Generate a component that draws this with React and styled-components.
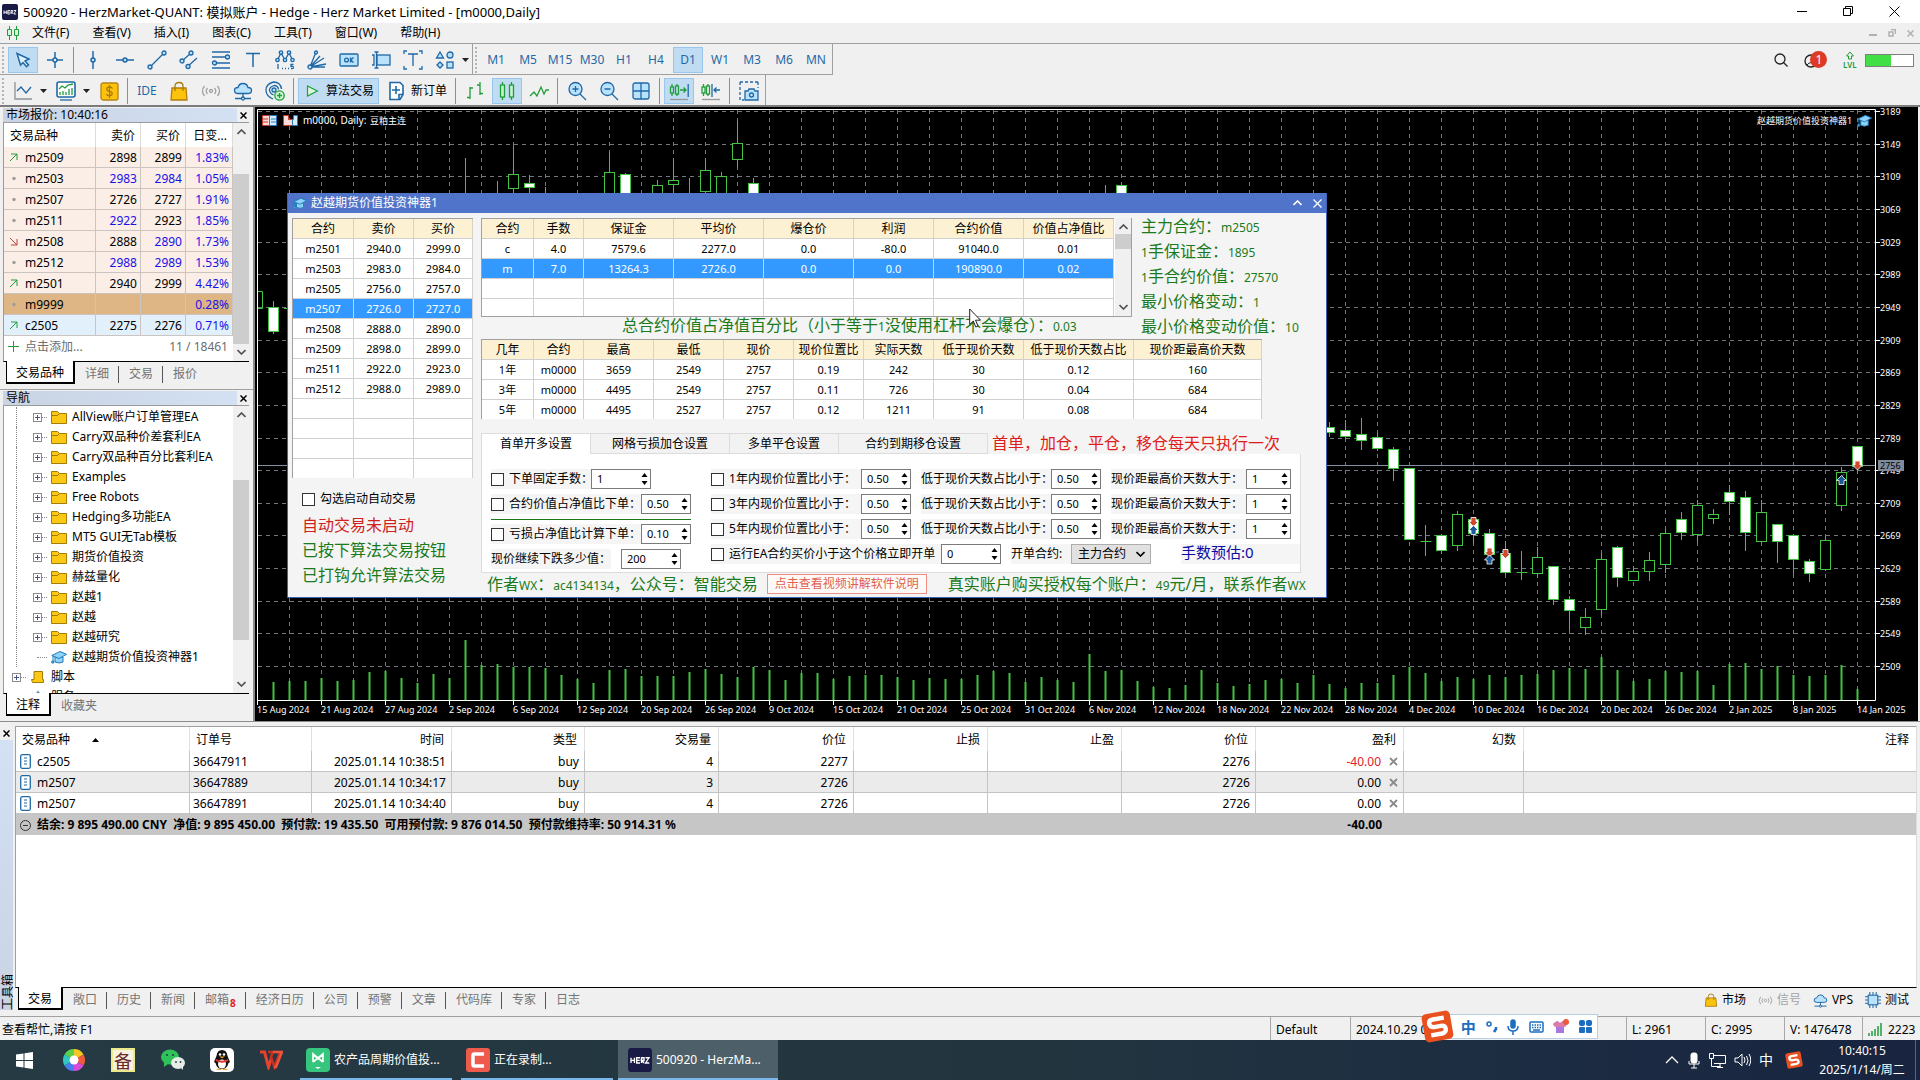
import React from 'react';
import styled, { createGlobalStyle, css } from 'styled-components';

const Global = createGlobalStyle`
  *, *::before, *::after { box-sizing: border-box; }
  body { margin: 0; background: #f0f0f0; color: #000; font: 12px/16px "Noto Sans", "Noto Sans CJK SC", sans-serif; }
  button, input, select { font: inherit; color: inherit; margin: 0; padding: 0; border: 0; background: none; border-radius: 0; }
  table { border-spacing: 0; table-layout: fixed; }
  th, td { padding: 1px 0 0; font-weight: 400; white-space: nowrap; }
  svg { display: block; flex: none; }
`;

const BLUE = '#1f68a6';
const SKY = '#b9e2fd';
const GREEN = '#1f9d3a';

/* ---------- icons ---------- */
const Glyph = ({ size = 20, color = BLUE, w = 1.3, children }) => (
  <svg width={size} height={size} viewBox="0 0 20 20" fill="none" stroke={color} strokeWidth={w} aria-hidden="true">{children}</svg>
);

const Hat = ({ size = 16 }) => (
  <svg width={size} height={size} viewBox="0 0 16 16" aria-hidden="true">
    <path d="M4 8v5q4 2 8-0V8z" fill="#8fd3fb" stroke="#1e7ab8" />
    <path d="M.8 6.500 9 2.500l6.500 2.800L8 9.500z" fill="#8fd3fb" stroke="#1e7ab8" />
    <path d="M2 7v5M.8 12h2v2h-2z" stroke="#1e7ab8" fill="#8fd3fb" />
  </svg>
);

const herz = (s) => (
  <svg width={s} height={s} viewBox="0 0 16 16" aria-hidden="true">
    <rect width="16" height="16" rx="2" fill="#191a45" />
    <path d="M2 6.500v3.500M4.300 6.500v3.500M2 8.200h2.300M8 6.500H5.800V10H8M5.800 8.200h2M9 10V6.500h1.700v1.800H9l1.700 1.700M11.700 6.500h2.300L11.700 10h2.500" stroke="#fff" strokeWidth=".9" fill="none" />
  </svg>
);

const ic = {
  cursor: <Glyph><path d="M4 3.500 16 9l-4 2 3.500 4-2 1.700L10 12.500 7.500 15z" fill="#dff1fd" strokeWidth="1.500" /></Glyph>,
  cross: <Glyph w={1.500}><path d="M10 2v6M10 12v6M2 10h6M12 10h6" /><circle cx="10" cy="10" r="2" /></Glyph>,
  vline: <Glyph w={1.500}><path d="M10 1v7M10 12v7" /><circle cx="10" cy="10" r="2" fill={SKY} /></Glyph>,
  hline: <Glyph w={1.500}><path d="M1 10h7M12 10h7" /><circle cx="10" cy="10" r="2" fill={SKY} /></Glyph>,
  trend: <Glyph><path d="M3 17 17 3" /><circle cx="3" cy="17" r="2" fill={SKY} /><circle cx="17" cy="3" r="2" fill={SKY} /></Glyph>,
  channel: <Glyph><path d="M3 11 12 3M8 17 18 8" /><circle cx="3" cy="11" r="2" fill={SKY} /><circle cx="12" cy="3" r="2" fill={SKY} /><circle cx="9" cy="16.500" r="2" fill={SKY} /></Glyph>,
  fib: <Glyph><path d="M1 2h18M1 7h14M5 13h14M1 18h18" /><circle cx="16.500" cy="7" r="2" fill={SKY} /><circle cx="3.500" cy="13" r="2" fill={SKY} /></Glyph>,
  text: <Glyph w={1.500}><path d="M3 3.500h14M10 3.500V17" /></Glyph>,
  elliott: <Glyph><path d="M2.500 10 6 3l4 7 4-7 3.500 7" />{[[2.5, 10], [6, 2.5], [10, 10], [14, 2.5], [17.5, 10]].map(([x, y]) => <circle key={x} cx={x} cy={y} r="1.700" fill={SKY} />)}<path d="M3 14v5M7 18.500h1M10 18.500h1M13 18.500h1M18.500 14.500H16V16.500q2.500-.5 2.500 1T16 18.500" /></Glyph>,
  gann: <Glyph><path d="M3 17 9 2M3 17l10-11M3 17l14-9M3 17l16-3M3 17h15" /><circle cx="3" cy="17" r="2" fill={SKY} /><circle cx="9" cy="2.500" r="1.500" fill={SKY} /></Glyph>,
  ok: <Glyph><rect x="1" y="4" width="18" height="12" rx="1" fill={SKY} /><circle cx="7.500" cy="10" r="1.900" /><path d="M11.500 7.500v5M14.500 7.500l-2.800 2.500 2.800 2.500" /></Glyph>,
  label: <Glyph><rect x="6" y="5" width="13" height="10" fill={SKY} /><path d="M1 5h2v10H1M5.500 2v16M3.500 2h4M3.500 18h4" /></Glyph>,
  tbox: <Glyph><path d="M5 4h10M10 4v12M1 4V1h3M16 1h3v3M19 16v3h-3M4 19H1v-3" /></Glyph>,
  shapes: <Glyph><path d="M5 2l3.500 6h-7zM5 12l3 3-3 3-3-3z" fill={SKY} /><circle cx="15" cy="5" r="3" fill={SKY} /><rect x="12" y="12" width="6" height="6" fill={SKY} /></Glyph>,
  lineChart: <Glyph><path d="M2 1v17h17" stroke="#8a9299" /><path d="m4 10 4-4 5 6 5-6" /></Glyph>,
  indicators: <Glyph><rect x="1" y="1" width="18" height="15" rx="2" fill="#fff" strokeWidth="1.600" /><path d="m3 8 3-3 3 2 3-3 5-1" stroke={GREEN} /><path d="M4 14v-3M7 14v-4M10 14v-3M13 14V8M16 14V7" stroke={GREEN} /><path d="M4 19h12" /></Glyph>,
  dollar: <Glyph><rect x="2" y="2" width="17" height="17" rx="2" fill="#fdc20b" stroke="#b58415" /><path d="M13.500 7.500q-1-1.500-3-1.500-2.700 0-2.700 2t2.700 2.400 2.700 2.200-2.700 2.200q-2 0-3.200-1.600M10.500 4v13" stroke="#a97a0e" /></Glyph>,
  bag: <Glyph><path d="M3 7h14l1 12H2z" fill="#fdc20b" stroke="#b07f0d" /><path d="M6 10V5q0-3.500 4-3.500T14 5v5" stroke="#a97a0e" /></Glyph>,
  signals: <Glyph color="#a3a3a3"><circle cx="10" cy="10" r="1.500" /><path d="M6.500 7q-2.500 3 0 6M13.500 7q2.500 3 0 6M3.500 5q-4 5 0 10M16.500 5q4 5 0 10" /></Glyph>,
  cloud: <Glyph><path d="M5 12.500q-3.500 0-3.500-3T5 6.500Q6 2.500 10 2.500t5 4q3.500 0 3.500 3t-3.500 3z" fill={SKY} /><path d="M10 12.500v4M2 17.500h6M12 17.500h6" /><circle cx="10" cy="17.500" r="1.500" /></Glyph>,
  antenna: <Glyph><path d="M8 18q-7-3-7-9t7.500-8q7 0 8 7M8.500 14q-4-2-4-5t4.500-4.500q4 0 4.500 4" /><circle cx="9" cy="9" r="2" fill={SKY} /><circle cx="14.500" cy="14.500" r="4.700" fill="#c9f5cf" stroke={GREEN} /><path d="M14.500 12v5M12 14.500h5" stroke={GREEN} /></Glyph>,
  play: <Glyph size={18}><path d="M5 4.500 16 10 5 15.500z" fill="#d8f8dc" stroke={GREEN} /></Glyph>,
  order: <Glyph w={1.600}><path d="M4 1.500h10l3 3v9l-3 5H4z" fill="#fff" /><path d="M10 5v8M6 9h8M13 18.500v-5h4" /></Glyph>,
  bars: <Glyph color={GREEN}><path d="M5 6v12M2 16.500h3M5 7h3M15 1v13M12 4h3M15 12.500h3" /></Glyph>,
  candles: <Glyph color={GREEN}><path d="M5.500 1v3M5.500 16v3M14.500 1v3M14.500 16v3" /><rect x="3.500" y="4" width="4" height="12" fill="#c6f3cc" /><rect x="12.500" y="4" width="4" height="12" fill="#c6f3cc" /></Glyph>,
  zigzag: <Glyph color={GREEN}><path d="m1 15 4-4 3 4 4-9 3 7 2-4h3" /></Glyph>,
  zoomIn: <Glyph><circle cx="8.500" cy="8" r="6.500" fill={SKY} /><path d="M8.500 5v6M5.500 8h6M13 13l6 6" /></Glyph>,
  zoomOut: <Glyph><circle cx="8.500" cy="8" r="6.500" fill={SKY} /><path d="M5.500 8h6M13 13l6 6" /></Glyph>,
  tiles: <Glyph><rect x="2" y="2" width="16" height="16" rx="2" fill={SKY} /><path d="M10 2v16M2 10h16" /></Glyph>,
  scroll: <Glyph color={GREEN}><path d="M3 3v3M3 12v3M8 3v2M8 13v2M11 9h6M14.500 6.500 17 9l-2.500 2.500" /><rect x="1.500" y="6" width="3" height="6" /><rect x="6.500" y="5" width="3" height="8" /><path d="M19.200 3v13" stroke={BLUE} /><path d="M1 18.500h18" stroke="#999" /></Glyph>,
  shift: <Glyph color={GREEN}><path d="M2.500 3v3M2.500 12v3M7 3v2M7 13v2" /><rect x="1" y="6" width="3" height="6" /><rect x="5.500" y="5" width="3" height="8" /><path d="M11 3v13M19 9h-6M15.500 6.500 13 9l2.500 2.500" stroke={BLUE} /><path d="M1 18.500h18" stroke="#999" /></Glyph>,
  camera: <Glyph><path d="M1 1h18M1 1v18h4M19 1v6" strokeDasharray="3 2" /><path d="M6 10h3l1-2h5l1 2h3v9H6z" fill={SKY} /><circle cx="12.500" cy="14" r="2" /></Glyph>,
  up: <svg width="9" height="9" viewBox="0 0 9 9" fill="none" stroke={GREEN} aria-hidden="true"><path d="M1 8 8 1M2 1h6v6" /></svg>,
  down: <svg width="9" height="9" viewBox="0 0 9 9" fill="none" stroke="#b8453a" aria-hidden="true"><path d="m1 1 7 7M8 2v6H2" /></svg>,
  flat: <svg width="9" height="9" viewBox="0 0 9 9" aria-hidden="true"><circle cx="5" cy="4.500" r="1.700" fill="#9d9d9d" /></svg>,
  plus: <svg width="11" height="11" viewBox="0 0 11 11" stroke={GREEN} aria-hidden="true"><path d="M5.500 0v11M0 5.500h11" /></svg>,
  folder: <svg width="16" height="13" viewBox="0 0 16 13" aria-hidden="true"><path d="M.5.500h6l2 2h7v10H.5z" fill="#fbc913" stroke="#a57c00" /><path d="M.5 4.500h6l2-2" fill="none" stroke="#a57c00" /></svg>,
  script: <svg width="13" height="13" viewBox="0 0 13 13" aria-hidden="true"><path d="M3 .5h8.500v8h1v3H1.500l-1-3H3z" fill="#fbc913" stroke="#a57c00" /></svg>,
  service: <Glyph size={14}><circle cx="10" cy="10" r="6" fill={SKY} /><path d="M10 1v4M3 4l3 3M17 4l-3 3" /></Glyph>,
  doc: <svg width="11" height="15" viewBox="0 0 11 15" fill="#fff" stroke={BLUE} aria-hidden="true"><rect x=".7" y=".7" width="9.600" height="13.600" rx="1.500" strokeWidth="1.300" /><path d="M4 4h3M4 7h3M4 10h3" /></svg>,
  tinyX: <svg width="7" height="7" viewBox="0 0 7 7" stroke="currentColor" strokeWidth="1.500" aria-hidden="true"><path d="m.5.500 6 6M6.500.5l-6 6" /></svg>,
  rowX: <svg width="9" height="9" viewBox="0 0 9 9" stroke="currentColor" strokeWidth="1.800" aria-hidden="true"><path d="m1 1 7 7M8 1 1 8" /></svg>,
  chevUp: <svg width="9" height="6" viewBox="0 0 9 6" fill="none" stroke="currentColor" strokeWidth="1.600" aria-hidden="true"><path d="m.5 5 4-4 4 4" /></svg>,
  chevDown: <svg width="9" height="6" viewBox="0 0 9 6" fill="none" stroke="currentColor" strokeWidth="1.600" aria-hidden="true"><path d="m.5 1 4 4 4-4" /></svg>,
  drop: <svg width="7" height="4" viewBox="0 0 7 4" aria-hidden="true"><path d="M0 0h7L3.500 4z" fill="#222" /></svg>,
  chip: <Glyph size={16}><rect x="4" y="4" width="12" height="12" fill={SKY} /><path d="M6 0v4M10 0v4M14 0v4M6 16v4M10 16v4M14 16v4M0 6h4M0 10h4M0 14h4M16 6h4M16 10h4M16 14h4" /></Glyph>,
};

/* ---------- frame ---------- */
const Page = styled.div`
  display: flex; flex-direction: column; min-height: 100vh; overflow: hidden;
`;
const TitleBar = styled.header`
  display: flex; align-items: center; justify-content: space-between; height: 23px; padding: 0 20px 0 2px; background: #fff;
`;
const Caption = styled.div`display: flex; align-items: center; gap: 5px; white-space: nowrap; font-size: 13px;`;
const Controls = styled.div`display: flex; align-items: center; gap: ${(p) => p.$gap}px; color: ${(p) => p.$color || '#000'};`;
const Plain = styled.button`display: flex; align-items: center; justify-content: center; gap: 4px; white-space: nowrap;`;
const MenuBar = styled.nav`
  display: flex; align-items: center; gap: 12px; height: 21px; padding: 0 6px; border-bottom: 1px solid #a0a0a0;
`;
const Menus = styled.div`display: flex; align-items: center; gap: 23px; margin-right: auto;`;

const Tools = styled.div`
  display: flex; justify-content: space-between; align-items: flex-start; border-bottom: 2px solid #7c7c7c;
`;
const ToolRow = styled.div`display: flex;`;
const ToolGroup = styled.div`
  display: flex; align-items: center; gap: 2px; height: ${(p) => (p.$last ? 30 : 31)}px; padding: 2px 1px 1px 2px;
  border-right: 1px solid #a0a0a0; ${(p) => !p.$last && 'border-bottom: 1px solid #a0a0a0;'}
  &::before { content: ''; width: 2px; height: 26px; margin-right: 2px; background: repeating-linear-gradient(#b4b4b4 0 2px, transparent 2px 4px); }
`;
const Tool = styled.button`
  display: flex; align-items: center; justify-content: center; gap: 5px; width: ${(p) => p.$w || 30}px; height: 26px; color: ${(p) => p.$color || BLUE};
  ${(p) => p.$on && css`background: #c0dcf3; border: 1px solid #98c6ec;`}
`;
const Drop = styled.button`width: 9px; height: 26px; display: flex; align-items: center;`;
const Sep = styled.span`width: 1px; height: 26px; margin: 0 2px 0 1px; background: #8e8e8e;`;
const Status = styled.div`display: flex; align-items: center; padding-right: 6px; height: 32px;`;
const Spacer = styled.span`width: ${(p) => p.$w}px; flex: none;`;
const Battery = styled.span`
  width: 49px; height: 13px; border: 1px solid #808080; background: linear-gradient(90deg, #3fdf45 54%, #fff 54%);
`;

/* ---------- side panels ---------- */
const Work = styled.div`display: flex; align-items: stretch; border-bottom: 1px solid #8c8c8c;`;
const Side = styled.aside`width: 255px; flex: none; border-right: 2px solid #8c8c8c;`;
const Panel = styled.section`padding: 1px 4px 5px 3px; ${(p) => p.$top && 'border-bottom: 1px solid #a0a0a0;'}`;
const PanelHead = styled.div`display: flex; align-items: center; height: 14px;`;
const PanelTitle = styled.h2`
  margin: 0; flex: 1; height: 14px; padding: 0 3px; font-size: 12px; line-height: 14px; font-weight: 400;
  background: linear-gradient(90deg, #c9d3e3, #d3e1f3);
`;
const HeadClose = styled(Plain)`width: 12px; height: 14px;`;
const PanelBody = styled.div`
  display: flex; height: ${(p) => p.$h}px; overflow: hidden; background: #fff; border-top: 1px solid #9a9a9a; border-left: 1px solid #9a9a9a; border-bottom: 1px solid #000;
`;
const Fill = styled.div`flex: 1; min-width: 0; overflow: hidden;`;
const ScrollTrack = styled.div`
  display: flex; flex-direction: column; align-items: center; justify-content: space-between; width: ${(p) => p.$w || 16}px; margin-left: ${(p) => p.$gap || 0}px;
  padding: 6px 0; background: #f0f0f0; color: #505050;
`;
const Thumb = styled.span`align-self: stretch; height: ${(p) => p.$h}px; margin: ${(p) => p.$m}px 0 auto; background: #cdcdcd;`;

const Quotes = styled.table`
  width: 100%;
  th { height: 24px; text-align: right; padding-right: 5px; border-right: 1px solid #dcdcdc; }
  th:first-child { text-align: left; padding-left: 6px; }
  td { height: 21px; text-align: right; padding-right: 3px; border-right: 1px solid #cbc4c0; border-bottom: 1px solid #cbc4c0; }
`;
const QuoteRow = styled.tr`background: ${(p) => p.$bg || '#fbeee6'};`;
const Price = styled.td`color: ${(p) => (p.$blue ? '#1a10e8' : '#000')};`;
const Sym = styled.span`display: flex; align-items: center; gap: 7px; padding-left: 5px;`;
const AddRow = styled.div`display: flex; align-items: center; justify-content: space-between; height: 21px; padding: 0 5px 0 4px; color: #6d6d6d;`;
const AddBtn = styled(Plain)`gap: 6px;`;

const Tabs = styled.div`display: flex; padding-left: 3px; height: 22px;`;
const Tab = styled.button`
  position: relative; padding: 1px 10px 0; height: ${(p) => (p.$on ? 23 : 22)}px; color: ${(p) => (p.$on ? '#000' : '#747474')}; white-space: nowrap;
  ${(p) => p.$on && css`margin-top: -1px; background: #fff; border: 1px solid #000; border-width: 0 2px 2px 1px; padding: 2px 9px 0;`}
  ${(p) => p.$bar && css`&::after { content: ''; position: absolute; right: 0; top: 4px; bottom: 1px; width: 1px; background: #555; }`}
`;
const Sup = styled.sub`font-size: 10px; font-weight: 700; color: #e02020; line-height: 0; margin-left: 1px;`;

const Tree = styled.ul`
  list-style: none; margin: 0; padding: 1px 0 0 12px;
`;
const Node = styled.li`
  display: flex; align-items: center; height: 20px; white-space: nowrap; 
  ${(p) => (p.$root ? 'margin-left: -4px;' : css`padding-left: ${p.$pad}px; border-left: 1px dotted #888;`)}
`;
const Expand = styled.button`
  width: 9px; height: 9px; border: 1px solid #8a8a8a; background: linear-gradient(#44538a, #44538a) center / 5px 1px no-repeat, linear-gradient(#44538a, #44538a) center / 1px 5px no-repeat, #fff;
`;
const Dots = styled.span`width: ${(p) => p.$w}px; border-top: 1px dotted #888; margin-right: ${(p) => p.$r || 4}px;`;
const Leaf = styled.button`display: flex; align-items: center; gap: ${(p) => p.$gap || 5}px;`;

/* ---------- chart ---------- */
const ChartPane = styled.main`position: relative; flex: 1; min-width: 0; background: #000;`;
const ChartSvg = styled.svg`width: 100%; height: auto; overflow: visible;`;

const X = (k) => 273.5 + 16 * k;
const vol1 = [366, 362, 362, 354, 362, 360, 335, 333, 354, 369, 342, 354, 240, 315, 312, 321, 320, 323, 345, 357, 369, 329, 327, 348, 348, 348, 336, 327, 343, 351, 320, 330, 360, 340, 339, 357, 348, 345, 345, 351, 360, 354, 357, 357, 345, 333, 339, 365, 351, 360, 366, 282, 333, 330, 363, 381, 384, 374, 330, 369, 378, 372, 360, 357, 369].map((v) => 560 + v / 3);
const vol2 = [1433, 1455, 1466, 1454, 1453, 1433, 1413, 1428, 1448, 1438, 1443, 1433, 1438, 1433, 1430, 1421, 1416, 1419, 1388, 1421, 1448, 1443, 1423, 1426, 1423, 1458, 1406, 1404, 1419, 1412, 1433, 1436, 1433, 1409, 1468].map((v) => 90 + v / 2.45);
const volumes = [...vol1, ...vol2];
/* slot, body top, body bottom, wick top, wick bottom, filled */
const early = [
  [0, 307, 331, 301, 334, 1], [12, 193, 193, 158, 193, 0], [14, 193, 193, 181, 193, 0], [15, 174, 188, 146, 200, 0], [16, 183, 187, 175, 200, 1],
  [17, 193, 193, 187, 193, 0], [21, 172, 200, 152, 200, 0], [22, 174, 200, 173, 200, 1], [24, 185, 200, 180, 200, 0], [25, 180, 184, 158, 200, 0], [26, 200, 200, 178, 200, 0],
  [27, 170, 191, 158, 200, 0], [28, 176, 200, 172, 200, 0], [29, 143, 159, 121, 167, 0], [30, 183, 200, 178, 200, 1], [52, 200, 200, 185, 200, 0], [53, 185, 200, 183, 200, 1],
];
const late = [
  [826, 837, 813, 850, 1], [832, 847, 808, 855, 1], [843, 857, 803, 882, 1], [850, 877, 840, 885, 1], [880, 925, 875, 958, 1], [927, 1099, 927, 1103, 1], [1104, 1104, 1066, 1142, 0],
  [1090, 1126, 1088, 1137, 1], [1039, 1114, 1031, 1129, 0], [1052, 1085, 1045, 1110, 1], [1086, 1138, 1076, 1150, 1], [1137, 1180, 1105, 1188, 1], [1180, 1180, 1129, 1200, 0],
  [1145, 1183, 1120, 1195, 0], [1166, 1248, 1166, 1262, 1], [1247, 1273, 1240, 1323, 1], [1291, 1315, 1269, 1335, 0], [1148, 1271, 1134, 1286, 0], [1120, 1192, 1117, 1218, 1],
  [1179, 1200, 1165, 1204, 0], [1152, 1178, 1132, 1203, 0], [1086, 1161, 1075, 1184, 0], [1051, 1082, 1034, 1102, 1], [1017, 1089, 1004, 1107, 0], [1039, 1048, 1027, 1063, 0],
  [986, 1008, 967, 1041, 1], [996, 1082, 982, 1130, 1], [1034, 1106, 1004, 1110, 0], [1063, 1106, 1063, 1159, 1], [1091, 1150, 1088, 1185, 1], [1154, 1183, 1150, 1205, 1],
  [1103, 1173, 1093, 1178, 0], [936, 1016, 923, 1031, 0], [872, 920, 872, 940, 1],
].map((c, n) => [66 + n, ...c.slice(0, 4).map((v) => Math.round(90 + v / 2.45)), c[4]]);
const candles = [...early, ...late];
const dates = '15 Aug 2024,21 Aug 2024,27 Aug 2024,2 Sep 2024,6 Sep 2024,12 Sep 2024,20 Sep 2024,26 Sep 2024,9 Oct 2024,15 Oct 2024,21 Oct 2024,25 Oct 2024,31 Oct 2024,6 Nov 2024,12 Nov 2024,18 Nov 2024,22 Nov 2024,28 Nov 2024,4 Dec 2024,10 Dec 2024,16 Dec 2024,20 Dec 2024,26 Dec 2024,2 Jan 2025,8 Jan 2025,14 Jan 2025'.split(',');
const prices = Array.from({ length: 18 }, (_, n) => 3189 - 40 * n);
const priceY = (n) => Math.round(111 + n * 32.65) + 0.5;
const LIME = '#41c441';

const Arrow = ({ x, y, sell }) => (
  <path transform={`translate(${x} ${y}) scale(1 ${sell ? -1 : 1})`} d="M0-5 5 0H2.500V4h-5V0H-5z" fill={sell ? '#d0492f' : '#1c5a9c'} stroke="#fff" strokeWidth=".8" />
);

const Chart = () => (
  <ChartSvg viewBox="255 107 1665 614" fontSize="9" fill="#fff" role="img" aria-label="m0000 Daily">
    <rect x="1918" y="107" width="2" height="614" fill="#f0f0f0" />
    <g stroke="#71797f" strokeDasharray="4 4">
      {Array.from({ length: 50 }, (_, n) => <path key={n} d={`M${289.5 + 32 * n} 110V700`} />)}
      {prices.map((p, n) => <path key={p} d={`M258 ${priceY(n)}H1875`} />)}
    </g>
    <path d="M257 465.500H1875" stroke="#8390a0" />
    <g fill={LIME}>{volumes.map((y, k) => <rect key={k} x={X(k) - 1} y={Math.round(y)} width="2" height={700 - Math.round(y)} />)}</g>
    <path d="M258 291.500h4.500v17H258M284 308.500h4" fill="none" stroke={LIME} />
    <g stroke={LIME}>
      {candles.map(([k, t, b, wt, wb, f]) => (
        <g key={k}>
          <path d={`M${X(k)} ${wt}V${wb}`} />
          {t === b ? t > 200 && <path d={`M${X(k) - 5} ${t + 0.5}h11`} /> : <rect x={X(k) - 5} y={t + 0.5} width="10" height={Math.max(b - t, 2)} fill={f ? '#fff' : '#000'} />}
        </g>
      ))}
    </g>
    <path d="M1490 553l16-2M1842 476l16-11" stroke="#2f6ea5" strokeDasharray="3 3" />
    <Arrow x={1473.5} y={521.5} sell /><Arrow x={1473.5} y={530.5} /><Arrow x={1489.5} y={552} sell /><Arrow x={1489.5} y={560} />
    <Arrow x={1505.5} y={553.5} sell /><Arrow x={1841.5} y={480.5} /><Arrow x={1857.5} y={465} sell />
    <path d="M257.500 109.500H1875.500V700.500H257.500z" fill="none" stroke="#fff" />
    {dates.map((d, n) => <g key={d}><path d={`M${257.5 + 64 * n} 700v5`} stroke="#fff" /><text x={257 + 64 * n} y="713">{d}</text></g>)}
    {prices.map((p, n) => <g key={p}><path d={`M1875 ${priceY(n)}h5`} stroke="#fff" /><text x="1880" y={priceY(n) + 3}>{p}</text></g>)}
    <rect x="1878" y="460" width="26" height="11" fill="#7f8b9c" /><text x="1880" y="469" fill="#000">2756</text>
    <path d="M262.500 115.500h7v10h-7z" fill="#fbdcd8" stroke="#c0392b" /><path d="M269.500 115.500h7v10h-7z" fill="#d5ecfb" stroke="#2a7ab8" />
    <path d="M263 119h5M263 122h5" stroke="#c0392b" /><path d="M271 119h5M271 122h5" stroke="#2a7ab8" />
    <path d="M283.500 115.500h5v4h4v6h-9z" fill="#fbdcd8" stroke="#c0392b" /><path d="M297.500 115.500h-4v4h-1v6h5z" fill="#d5ecfb" stroke="#2a7ab8" />
    <text x="303" y="124" fontSize="10">m0000, Daily:</text><text x="370" y="124">豆粕主连</text>
    <text x="1757" y="124">赵越期货价值投资神器1</text>
    <g transform="translate(1857 113)"><Hat size={15} /></g>
  </ChartSvg>
);

/* ---------- dialog ---------- */
const Dialog = styled.section`
  position: absolute; left: 32px; top: 86px; width: 1040px; height: 405px; background: #f4f4f4; border: 1px solid #3e62b5; border-top: 0;
`;
const DialogBar = styled.header`
  display: flex; align-items: center; height: 20px; padding: 0 4px 0 5px; gap: 4px; background: #4f74c9; color: #fff;
`;
const DialogName = styled.h1`margin: 0; flex: 1; font-size: 12px; line-height: 16px; font-weight: 400;`;
const DialogBody = styled.div`display: flex; gap: 9px; padding: 5px 4px 4px;`;
const LeftCol = styled.div`width: 180px; flex: none;`;
const MainCol = styled.div`flex: 1; min-width: 0;`;
const Grid = styled.table`
  width: ${(p) => p.$w}px; background: #fff; text-align: center; border-top: 1px solid #a0a0a0; border-left: 1px solid #a0a0a0; font-size: 11px;
  th { height: 20px; background: #fdf1d3; font-size: 12px; line-height: 16px; border-right: 1px solid #d8d2c4; border-bottom: 1px solid #d0d0d0; }
  td { height: 20px; line-height: 16px; border-right: 1px solid #d0d0d0; border-bottom: 1px solid #d0d0d0; }
  tr:last-child td { height: 19px; border-bottom: 0; }
`;
const GridRow = styled.tr`${(p) => p.$on && 'background: #3399ff; color: #fff;'}`;
const Frame = styled.div`display: flex; width: 651px; height: 99px; overflow: hidden; background: #fff; border: 1px solid #a0a0a0; border-width: 0 1px 1px 0;`;
const Note = styled.p`
  margin: 0; height: 17px; font-size: 16px; line-height: 17px; white-space: nowrap; color: ${(p) => p.$color || '#1b7a1b'}; padding-left: ${(p) => p.$indent || 0}px;
`;
const Num = styled.span`font-size: 12px;`;
const Overview = styled.div`display: flex; gap: 9px; margin-bottom: 4px;`;
const Facts = styled.div`display: flex; flex-direction: column; gap: 8px; flex: 1;`;
const Check = styled.input.attrs({ type: 'checkbox' })`
  appearance: none; width: 13px; height: 13px; flex: none; background: #fff; border: 1px solid #333;
  &:checked { background: #3399ff; }
`;
const CheckLabel = styled.label`
  display: flex; align-items: center; gap: 5px; width: ${(p) => p.$w}px; height: 20px; flex: none; white-space: nowrap; margin-right: ${(p) => p.$r || 0}px;
  background: ${(p) => (p.$clear ? 'none' : '#f5f5f5')};
`;
const Messages = styled.div`display: flex; flex-direction: column; gap: 8px; padding: 11px 0 0 10px;`;
const Strip = styled.div`display: flex; align-items: center; gap: 4px; margin-top: 14px; height: 21px;`;
const SetTabs = styled.div`display: flex; height: 21px;`;
const SetTab = styled.button`
  width: ${(p) => p.$w}px; height: 21px; border: 1px solid #dcdcdc; border-left-width: ${(p) => (p.$on ? 1 : 0)}px; background: ${(p) => (p.$on ? '#fff' : '#f2f2f2')};
  ${(p) => p.$on && 'border-bottom: 0;'}
`;
const SetPanel = styled.div`display: flex; width: 820px; height: 119px; padding: 5px 0 0 9px; background: #fff; border: 1px solid #dcdcdc; border-top: 0;`;
const Stack = styled.div`display: flex; flex-direction: column; gap: 5px; padding-top: 10px; width: ${(p) => p.$w}px; flex: none;`;
const Rule = styled.hr`margin: 0 0 -1px; border: 0; height: 1px; width: 200px; background: #1b7a1b;`;
const Divider = styled.span`width: 1px; height: 110px; margin: 0 9px 0 10px; background: #1b7a1b;`;
const Line = styled.div`display: flex; align-items: center; height: 20px;`;
const SpinBox = styled.span`
  display: flex; width: ${(p) => p.$w}px; height: 20px; flex: none; border: 1px solid #7a7a7a; background: #fff; margin-right: 10px;
  input { flex: 1; min-width: 0; padding-left: 5px; font-size: 11px; appearance: textfield; outline: 0; }
  input::-webkit-inner-spin-button { appearance: none; margin: 0; }
`;
const Steps = styled.span`display: flex; flex-direction: column; justify-content: center; gap: 4px; width: 16px; padding-left: 4px;`;
const Pick = styled.span`display: flex; align-items: center; position: relative; width: 80px; height: 20px; margin-right: 30px; background: #e1e1e1; border: 1px solid #adadad;
  select { appearance: none; width: 100%; height: 18px; padding-left: 6px; outline: 0; }
  svg { position: absolute; right: 5px; pointer-events: none; }
`;
const Estimate = styled.output`flex: 1; height: 20px; background: #f5f5f5; color: #0c0ca4; font-size: 15px; line-height: 17px;`;
const Foot = styled.footer`display: flex; align-items: center; height: 22px; padding-left: 6px;`;
const Video = styled.a`
  margin: 0 21px 0 9px; width: 160px; height: 20px; line-height: 18px; border: 1px solid #ef8f84; background: #fffaf8; color: #e0604f; text-decoration: none; text-align: center;
`;
const Pointer = styled.svg`position: absolute; left: 714px; top: 201px;`;

const Spin = ({ id, w, value, step }) => (
  <SpinBox $w={w}>
    <input id={id} type="number" defaultValue={value} step={step} aria-label={id} />
    <Steps>
      <Plain aria-label="增加"><svg width="7" height="4" viewBox="0 0 7 4"><path d="M.5 4h6L3.500 0z" /></svg></Plain>
      <Plain aria-label="减少"><svg width="7" height="4" viewBox="0 0 7 4"><path d="M.5 0h6L3.500 4z" /></svg></Plain>
    </Steps>
  </SpinBox>
);

const DataGrid = ({ widths, heads, rows, on }) => (
  <Grid $w={widths.reduce((a, b) => a + b, 0)}>
    <colgroup>{widths.map((w, i) => <col key={i} style={{ width: w }} />)}</colgroup>
    <thead><tr>{heads.map((h) => <th key={h}>{h}</th>)}</tr></thead>
    <tbody>{rows.map((r, i) => <GridRow key={i} $on={i === on}>{heads.map((h, j) => <td key={h}>{r[j]}</td>)}</GridRow>)}</tbody>
  </Grid>
);
const split = (s) => s.split('|').map((r) => r.split(' '));
const contracts = [...split('m2501 2940.0 2999.0|m2503 2983.0 2984.0|m2505 2756.0 2757.0|m2507 2726.0 2727.0|m2508 2888.0 2890.0|m2509 2898.0 2899.0|m2511 2922.0 2923.0|m2512 2988.0 2989.0'), [], [], [], []];
const holdings = [...split('c 4.0 7579.6 2277.0 0.0 -80.0 91040.0 0.01|m 7.0 13264.3 2726.0 0.0 0.0 190890.0 0.02'), [], []];
const history = split('1年 m0000 3659 2549 2757 0.19 242 30 0.12 160|3年 m0000 4495 2549 2757 0.11 726 30 0.04 684|5年 m0000 4495 2527 2757 0.12 1211 91 0.08 684');

const InvestDialog = () => (
  <Dialog aria-label="赵越期货价值投资神器1">
    <DialogBar>
      <Hat size={14} /><DialogName>赵越期货价值投资神器1</DialogName>
      <Controls $gap={11} $color="#fff"><Plain aria-label="收起">{ic.chevUp}</Plain><Plain aria-label="关闭"><svg width="9" height="9" viewBox="0 0 9 9" stroke="#fff" strokeWidth="1.300"><path d="m.5.500 8 8M8.500.5l-8 8" /></svg></Plain></Controls>
    </DialogBar>
    <DialogBody>
      <LeftCol>
        <DataGrid widths={[61, 60, 59]} heads={['合约', '卖价', '买价']} rows={contracts} on={3} />
        <Messages>
          <CheckLabel $w={150} $clear><Check />勾选启动自动交易</CheckLabel>
          <Note $color="#cf1f1f">自动交易未启动</Note>
          <Note>已按下算法交易按钮</Note>
          <Note>已打钩允许算法交易</Note>
        </Messages>
      </LeftCol>
      <MainCol>
        <Overview>
          <div>
            <Frame>
              <DataGrid widths={[52, 50, 90, 90, 90, 80, 90, 90]} heads={['合约', '手数', '保证金', '平均价', '爆仓价', '利润', '合约价值', '价值占净值比']} rows={holdings} on={1} />
              <ScrollTrack $w={17} $gap={1}><Plain aria-label="上">{ic.chevUp}</Plain><Thumb $m={4} $h={15} /><Plain aria-label="下">{ic.chevDown}</Plain></ScrollTrack>
            </Frame>
            <Note $indent={141}>总合约价值占净值百分比（小于等于<Num>1</Num>没使用杠杆不会爆仓）：<Num>0.03</Num></Note>
          </div>
          <Facts>
            <Note>主力合约：<Num>m2505</Num></Note>
            <Note><Num>1</Num>手保证金：<Num>1895</Num></Note>
            <Note><Num>1</Num>手合约价值：<Num>27570</Num></Note>
            <Note>最小价格变动：<Num>1</Num></Note>
            <Note>最小价格变动价值：<Num>10</Num></Note>
          </Facts>
        </Overview>
        <DataGrid widths={[52, 50, 70, 70, 70, 70, 70, 90, 110, 128]} heads={['几年', '合约', '最高', '最低', '现价', '现价位置比', '实际天数', '低于现价天数', '低于现价天数占比', '现价距最高价天数']} rows={history} />
        <Strip>
          <SetTabs><SetTab $on $w={110}>首单开多设置</SetTab><SetTab $w={139}>网格亏损加仓设置</SetTab><SetTab $w={109}>多单平仓设置</SetTab><SetTab $w={149}>合约到期移仓设置</SetTab></SetTabs>
          <Note $color="#e01b1b">首单，加仓，平仓，移仓每天只执行一次</Note>
        </Strip>
        <SetPanel>
          <Stack $w={201}>
            <Line><CheckLabel $w={100}><Check />下单固定手数：</CheckLabel><Spin id="固定手数" w={60} value="1" /></Line>
            <Line><CheckLabel $w={150}><Check />合约价值占净值比下单：</CheckLabel><Spin id="净值比" w={50} value="0.50" step="0.01" /></Line>
            <Rule />
            <Line><CheckLabel $w={150}><Check />亏损占净值比计算下单：</CheckLabel><Spin id="亏损比" w={50} value="0.10" step="0.01" /></Line>
            <Line><CheckLabel $w={120} $r={10} htmlFor="下跌值">现价继续下跌多少值：</CheckLabel><Spin id="下跌值" w={60} value="200" /></Line>
          </Stack>
          <Divider />
          <Stack $w={589}>
            {['1', '3', '5'].map((y) => (
              <Line key={y}>
                <CheckLabel $w={150}><Check />{y}年内现价位置比小于：</CheckLabel><Spin id={`位置比${y}`} w={50} value="0.50" step="0.01" />
                <CheckLabel $w={130} htmlFor={`占比${y}`}>低于现价天数占比小于：</CheckLabel><Spin id={`占比${y}`} w={50} value="0.50" step="0.01" />
                <CheckLabel $w={135} htmlFor={`天数${y}`}>现价距最高价天数大于：</CheckLabel><Spin id={`天数${y}`} w={45} value="1" />
              </Line>
            ))}
            <Line>
              <CheckLabel $w={230}><Check />运行EA合约买价小于这个价格立即开单</CheckLabel><Spin id="开单价" w={60} value="0" />
              <CheckLabel $w={60} htmlFor="open-contract">开单合约:</CheckLabel>
              <Pick><select id="open-contract"><option>主力合约</option></select>{ic.chevDown}</Pick>
              <Estimate>手数预估:0</Estimate>
            </Line>
          </Stack>
        </SetPanel>
        <Foot>
          <Note>作者<Num>WX</Num>：<Num>ac4134134</Num>，公众号：智能交易</Note>
          <Video href="#video">点击查看视频讲解软件说明</Video>
          <Note>真实账户购买授权每个账户：<Num>49</Num>元/月，联系作者<Num>WX</Num></Note>
        </Foot>
      </MainCol>
    </DialogBody>
  </Dialog>
);

/* ---------- terminal ---------- */
const Terminal = styled.section`display: flex; flex: 1; padding: 4px 3px 6px 0; border-bottom: 1px solid #a0a0a0;`;
const Handle = styled.div`display: flex; flex-direction: column; width: 15px; padding: 2px 2px 0 0; align-items: center; gap: 2px;`;
const HandleClose = styled(Plain)`height: 10px; width: 13px;`;
const HandleBar = styled.div`flex: 1; width: 13px; display: flex; align-items: flex-end; background: linear-gradient(#d3e1f3, #c9d3e3);`;
const Vertical = styled.span`writing-mode: vertical-rl; text-orientation: sideways; transform: rotate(180deg); width: 13px; line-height: 13px; font-family: "Noto Sans CJK SC", sans-serif;`;
const TermBody = styled.div`flex: 1; min-width: 0; display: flex; flex-direction: column;`;
const TermSheet = styled.div`flex: 1; background: #fff; border: 1px solid #a0a0a0; border-bottom-color: #000; border-right-color: #ddd;`;
const Orders = styled.table`
  width: 100%;
  th { height: 24px; text-align: right; padding-right: 7px; border-right: 1px solid #e0e0e0; }
  th:nth-child(-n+2) { text-align: left; padding-left: 6px; }
  td { height: 21px; text-align: right; padding-right: 5px; border-right: 1px solid #c4c4c4; border-bottom: 1px solid #c4c4c4; }
  td:nth-child(2) { text-align: left; padding-left: 3px; }
  th:last-child, td:last-child { border-right: 0; }
`;
const OrderRow = styled.tr`background: ${(p) => (p.$alt ? '#ebebeb' : '#fff')};`;
const OrderName = styled.span`display: flex; align-items: center; gap: ${(p) => p.$gap || 6}px; padding-left: 4px;`;
const SortHead = styled.span`display: flex; align-items: center; gap: 22px;`;
const Profit = styled.span`display: flex; align-items: center; justify-content: flex-end; gap: 8px; color: ${(p) => (p.$red ? '#e0202a' : '#000')};`;
const RowClose = styled(Plain)`color: #8a8a8a;`;
const TotalRow = styled.tr`background: #c6c6c6; && td { font-weight: 700; border: 0; text-align: left; white-space: pre; }`;
const TotalProfit = styled.span`display: block; text-align: right; padding-right: 17px;`;
const TermFoot = styled.div`display: flex; justify-content: space-between;`;
const Links = styled.div`display: flex; align-items: center; gap: 12px; padding: 2px 8px 0 0;`;
const StatusBar = styled.footer`position: relative; display: flex; height: 23px; padding-left: 2px;`;
const StatusText = styled.span`flex: 1; line-height: 25px;`;
const Cell = styled.span`
  display: flex; align-items: center; gap: 6px; width: ${(p) => p.$w}px; height: 23px; padding: 2px 0 0 5px; white-space: nowrap; overflow: hidden;
  border-left: 1px solid #a8a8a8;
`;
const Ime = styled.div`
  position: absolute; left: 1436px; bottom: 1px; display: flex; align-items: center; justify-content: space-around; width: 162px; height: 25px; padding-left: 19px; background: #fff; border: 1px solid #b5cfe6; color: #1b6dc1;
`;
const ImeLogo = styled.span`position: absolute; left: -16px; top: -5px;`;
const ImeText = styled.span`font-size: 15px; font-weight: 700; line-height: 20px;`;

const orders = [
  ['c2505', '36647911', '2025.01.14 10:38:51', '4', '2277', '2276', '-40.00'],
  ['m2507', '36647889', '2025.01.14 10:34:17', '3', '2726', '2726', '0.00'],
  ['m2507', '36647891', '2025.01.14 10:34:40', '4', '2726', '2726', '0.00'],
];

/* ---------- taskbar ---------- */
const Taskbar = styled.footer`
  display: flex; justify-content: space-between; height: 40px; color: #fff; background: linear-gradient(90deg, #263a44, #22353f 55%, #1c2c42 80%, #182440);
`;
const Dock = styled.div`display: flex; align-items: center;`;
const DockIcon = styled.button`display: flex; align-items: center; justify-content: center; width: ${(p) => p.$w || 49}px; height: 40px;`;
const Running = styled.button`
  display: flex; align-items: center; gap: 4px; width: ${(p) => p.$w}px; height: 40px; padding: 2px 0 0 ${(p) => p.$pad}px; margin-right: ${(p) => p.$gap}px; border-bottom: 2px solid #7ab8ec; white-space: nowrap;
  background: ${(p) => (p.$on ? '#4d5f68' : 'none')};
`;
const Tray = styled.div`display: flex; align-items: center; gap: 8px; padding-right: 4px;`;
const TrayIme = styled.span`margin-right: 4px; font-size: 14px; line-height: 20px;`;
const Clock = styled.time`display: block; width: 90px; margin-left: 6px; text-align: center; line-height: 19px; white-space: nowrap;`;
const Desk = styled.span`width: 1px; height: 40px; background: #59667a;`;
const Memo = styled.span`font-size: 18px; line-height: 20px; width: 24px; height: 24px; border: 2px solid #ece98a; background: #f8f3e0; color: #6d2a2a; font-family: "Noto Sans CJK SC", sans-serif; display: flex; align-items: center; justify-content: center;`;
const Faint = styled.span`color: #a3a3a3;`;

const Sogou = ({ size }) => (
  <svg width={size} height={size} viewBox="0 0 30 30" aria-hidden="true"><g transform="rotate(-10 15 15)"><rect x="2" y="2" width="26" height="26" rx="4" fill="#e8501f" /><path d="M22 8H12q-4 0-4 3.300T12 15h6q4 0 4 3.300T18 22H8" fill="none" stroke="#fff" strokeWidth="4" /></g></svg>
);

const quotes = [
  ['up', 'm2509', '2898', '2899', '1.83%', ''], ['flat', 'm2503', '2983', '2984', '1.05%', 'ab'], ['flat', 'm2507', '2726', '2727', '1.91%', ''], ['flat', 'm2511', '2922', '2923', '1.85%', 'a'],
  ['down', 'm2508', '2888', '2890', '1.73%', 'b'], ['flat', 'm2512', '2988', '2989', '1.53%', 'ab'], ['up', 'm2501', '2940', '2999', '4.42%', ''], ['flat', 'm9999', '', '', '0.28%', '', '#deb584'], ['up', 'c2505', '2275', '2276', '0.71%', '', '#e2f0fc'],
];
const folders = ['AllView账户订单管理EA', 'Carry双品种价差套利EA', 'Carry双品种百分比套利EA', 'Examples', 'Free Robots', 'Hedging多功能EA', 'MT5 GUI无Tab模板', '期货价值投资', '赫兹量化', '赵越1', '赵越', '赵越研究'];
const drawTools = ['vline', 'hline', 'trend', 'channel', 'fib', 'text', 'elliott', 'gann', 'ok', 'label', 'tbox', 'shapes'];

export default function App() {
  return (
    <Page>
      <Global />
      <TitleBar>
        <Caption>{herz(16)}500920 - HerzMarket-QUANT: 模拟账户 - Hedge - Herz Market Limited - [m0000,Daily]</Caption>
        <Controls $gap={35}>
          <Plain aria-label="最小化"><svg width="11" height="11" stroke="#000"><path d="M0 5.500h10" /></svg></Plain>
          <Plain aria-label="还原"><svg width="11" height="11" stroke="#000" fill="none"><path d="M.5 2.500h7v7h-7zM2.500 2V.5h7v7H8" /></svg></Plain>
          <Plain aria-label="关闭"><svg width="11" height="11" stroke="#000"><path d="m.5.500 10 10M10.500.5l-10 10" /></svg></Plain>
        </Controls>
      </TitleBar>
      <MenuBar>
        <svg width="14" height="14" viewBox="0 0 14 14" stroke={GREEN} fill="#d8f8dc"><path d="M3.500 0v14M10.500 0v14" /><path d="M1.500 3.500h4v6h-4zM8.500 3.500h4v6h-4z" /></svg>
        <Menus>
          {['文件(F)', '查看(V)', '插入(I)', '图表(C)', '工具(T)', '窗口(W)', '帮助(H)'].map((m) => <Plain key={m}>{m}</Plain>)}
        </Menus>
        <Controls $gap={11} $color="#b0b0b0">
          <Plain aria-label="最小化图表"><svg width="8" height="8" stroke="currentColor" strokeWidth="2"><path d="M0 6h8" /></svg></Plain>
          <Plain aria-label="还原图表"><svg width="8" height="8" stroke="currentColor" fill="none"><path d="M1 3h4v4H1zM3 .5h4.500V5" strokeWidth="1.500" /></svg></Plain>
          <Plain aria-label="关闭图表">{ic.tinyX}</Plain>
        </Controls>
      </MenuBar>
      <Tools>
        <div>
          <ToolRow>
            <ToolGroup>
              <Tool $on aria-label="光标">{ic.cursor}</Tool><Tool aria-label="十字准线">{ic.cross}</Tool><Sep />
              {drawTools.map((t) => <Tool key={t} aria-label={t}>{ic[t]}</Tool>)}
              <Drop aria-label="更多图形">{ic.drop}</Drop>
            </ToolGroup>
            <ToolGroup>
              {['M1', 'M5', 'M15', 'M30', 'H1', 'H4', 'D1', 'W1', 'M3', 'M6', 'MN'].map((t) => <Tool key={t} $on={t === 'D1'}>{t}</Tool>)}
            </ToolGroup>
          </ToolRow>
          <ToolRow>
            <ToolGroup $last>
              <Tool aria-label="图表类型">{ic.lineChart}</Tool><Drop aria-label="图表菜单">{ic.drop}</Drop>
              <Tool aria-label="指标">{ic.indicators}</Tool><Drop aria-label="指标菜单">{ic.drop}</Drop>
              <Tool aria-label="财富">{ic.dollar}</Tool><Sep />
              <Tool>IDE</Tool><Tool aria-label="市场">{ic.bag}</Tool><Tool aria-label="信号">{ic.signals}</Tool><Tool aria-label="云">{ic.cloud}</Tool><Tool aria-label="网络">{ic.antenna}</Tool><Sep />
              <Tool $on $w={81} $color="#000">{ic.play}算法交易</Tool><Tool $w={71} $color="#000">{ic.order}新订单</Tool><Sep />
              <Tool aria-label="柱图">{ic.bars}</Tool><Tool $on aria-label="蜡烛图">{ic.candles}</Tool><Tool aria-label="线图">{ic.zigzag}</Tool><Sep />
              <Tool aria-label="放大">{ic.zoomIn}</Tool><Tool aria-label="缩小">{ic.zoomOut}</Tool><Tool aria-label="平铺">{ic.tiles}</Tool><Sep />
              <Tool $on aria-label="自动滚动">{ic.scroll}</Tool><Tool aria-label="图表移动">{ic.shift}</Tool><Sep />
              <Tool aria-label="截图">{ic.camera}</Tool>
            </ToolGroup>
          </ToolRow>
        </div>
        <Status>
          <Plain aria-label="搜索"><svg width="14" height="14" viewBox="0 0 14 14" fill="none" stroke="#222" strokeWidth="1.300"><circle cx="6" cy="6" r="5" /><path d="m9.500 9.500 4 4" /></svg></Plain>
          <Spacer $w={16} />
          <Plain aria-label="账户"><svg width="24" height="18" viewBox="0 0 24 18" fill="none"><circle cx="7" cy="10" r="6" stroke="#222" strokeWidth="1.300" /><path d="M3 14q4-5 8 0" stroke="#222" /><circle cx="14.500" cy="8.500" r="8.500" fill="#dd3b26" /><text x="11.500" y="13" fontSize="12" fill="#fff">1</text></svg></Plain>
          <Spacer $w={15} />
          <svg width="15" height="18" viewBox="0 0 15 18" fill="none" stroke={GREEN}><path d="M7 1 3.500 5H5.500v3h3V5h2z" /><text x="0" y="17" fontSize="8" fontWeight="600" fill={GREEN} stroke="none">LVL</text></svg>
          <Spacer $w={7} />
          <Battery />
        </Status>
      </Tools>

      <Work>
        <Side>
          <Panel $top>
            <PanelHead><PanelTitle>市场报价: 10:40:16</PanelTitle><HeadClose aria-label="关闭市场报价">{ic.tinyX}</HeadClose></PanelHead>
            <PanelBody $h={240}>
              <Fill>
                <Quotes>
                  <colgroup><col /><col style={{ width: 45 }} /><col style={{ width: 45 }} /><col style={{ width: 47 }} /></colgroup>
                  <thead><tr><th>交易品种</th><th>卖价</th><th>买价</th><th>日变...</th></tr></thead>
                  <tbody>
                    {quotes.map(([d, s, a, b, c, blue, bg]) => (
                      <QuoteRow key={s} $bg={bg}>
                        <td><Sym>{ic[d]}{s}</Sym></td><Price $blue={blue.includes('a')}>{a}</Price><Price $blue={blue.includes('b')}>{b}</Price><Price $blue>{c}</Price>
                      </QuoteRow>
                    ))}
                  </tbody>
                </Quotes>
                <AddRow><AddBtn>{ic.plus}点击添加...</AddBtn><span>11 / 18461</span></AddRow>
              </Fill>
              <ScrollTrack><Plain aria-label="上">{ic.chevUp}</Plain><Thumb $m={39} $h={170} /><Plain aria-label="下">{ic.chevDown}</Plain></ScrollTrack>
            </PanelBody>
            <Tabs><Tab $on>交易品种</Tab><Tab $bar>详细</Tab><Tab $bar>交易</Tab><Tab>报价</Tab></Tabs>
          </Panel>
          <Panel>
            <PanelHead><PanelTitle>导航</PanelTitle><HeadClose aria-label="关闭导航">{ic.tinyX}</HeadClose></PanelHead>
            <PanelBody $h={289}>
              <Fill>
                <Tree>
                  {folders.map((f) => <Node key={f} $pad={16}><Expand aria-label={`展开 ${f}`} /><Dots $w={5} /><Leaf>{ic.folder}{f}</Leaf></Node>)}
                  <Node $pad={20}><Dots $w={10} /><Leaf><Hat size={16} />赵越期货价值投资神器1</Leaf></Node>
                  <Node $root><Expand aria-label="展开 脚本" /><Dots $w={5} $r={5} /><Leaf $gap={7}>{ic.script}脚本</Leaf></Node>
                  <Node $root><Expand aria-label="展开 服务" /><Dots $w={5} $r={5} /><Leaf $gap={6}>{ic.service}服务</Leaf></Node>
                </Tree>
              </Fill>
              <ScrollTrack><Plain aria-label="上">{ic.chevUp}</Plain><Thumb $m={62} $h={160} /><Plain aria-label="下">{ic.chevDown}</Plain></ScrollTrack>
            </PanelBody>
            <Tabs><Tab $on>注释</Tab><Tab>收藏夹</Tab></Tabs>
          </Panel>
        </Side>
        <ChartPane>
          <Chart />
          <InvestDialog />
          <Pointer width="13" height="20" viewBox="0 0 13 20" aria-hidden="true"><path d="M.7 1v15.500l3.600-3.500 2.500 6 2.200-1-2.500-5.800h5z" fill="#fff" stroke="#222" /></Pointer>
        </ChartPane>
      </Work>

      <Terminal>
        <Handle><HandleClose aria-label="关闭工具箱">{ic.tinyX}</HandleClose><HandleBar><Vertical>工具箱</Vertical></HandleBar></Handle>
        <TermBody>
          <TermSheet>
            <Orders>
              <colgroup>{[174, 122, 140, 133, 134, 135, 134, 134, 134, 148, 120].map((w, i) => <col key={i} style={{ width: w }} />)}<col /></colgroup>
              <thead><tr><th><SortHead>交易品种<svg width="7" height="4" viewBox="0 0 7 4"><path d="M0 4h7L3.500 0z" /></svg></SortHead></th>{['订单号', '时间', '类型', '交易量', '价位', '止损', '止盈', '价位', '盈利', '幻数', '注释'].map((h, i) => <th key={i}>{h}</th>)}</tr></thead>
              <tbody>
                {orders.map(([s, n, t, v, p, q, r], i) => (
                  <OrderRow key={n} $alt={i === 1}>
                    <td><OrderName>{ic.doc}{s}</OrderName></td><td>{n}</td><td>{t}</td><td>buy</td><td>{v}</td><td>{p}</td><td /><td /><td>{q}</td>
                    <td><Profit $red={i === 0}>{r}<RowClose aria-label={`平仓 ${n}`}>{ic.rowX}</RowClose></Profit></td><td /><td />
                  </OrderRow>
                ))}
                <TotalRow>
                  <td colSpan={9}><OrderName><svg width="11" height="11" viewBox="0 0 11 11" fill="none" stroke="#333"><circle cx="5.500" cy="5.500" r="5" /><path d="M3 5.500h5" /></svg>结余: 9 895 490.00 CNY  净值: 9 895 450.00  预付款: 19 435.50  可用预付款: 9 876 014.50  预付款维持率: 50 914.31 %</OrderName></td>
                  <td><TotalProfit>-40.00</TotalProfit></td><td colSpan={2} />
                </TotalRow>
              </tbody>
            </Orders>
          </TermSheet>
          <TermFoot>
            <Tabs>
              <Tab $on>交易</Tab>
              {['敞口', '历史', '新闻', '邮箱', '经济日历', '公司', '预警', '文章', '代码库', '专家'].map((t) => <Tab key={t} $bar>{t}{t === '邮箱' && <Sup>8</Sup>}</Tab>)}
              <Tab>日志</Tab>
            </Tabs>
            <Links>
              <Plain><Glyph size={14}><path d="M3 7h14l1 12H2z" fill="#fdc20b" stroke="#b07f0d" /><path d="M6 10V5q0-3.500 4-3.500T14 5v5" stroke="#a97a0e" /></Glyph>市场</Plain>
              <Plain><Glyph size={15} color="#a3a3a3"><circle cx="10" cy="10" r="1.500" /><path d="M6.500 7q-2.500 3 0 6M13.500 7q2.500 3 0 6M3.500 5q-4 5 0 10M16.500 5q4 5 0 10" /></Glyph><Faint>信号</Faint></Plain>
              <Plain><Glyph size={15}><path d="M5 12.500q-3.500 0-3.500-3T5 6.500Q6 2.500 10 2.500t5 4q3.500 0 3.500 3t-3.500 3z" fill={SKY} /><path d="M10 12.500v4M2 17.500h6M12 17.500h6" /><circle cx="10" cy="17.500" r="1.500" /></Glyph>VPS</Plain>
              <Plain>{ic.chip}测试</Plain>
            </Links>
          </TermFoot>
        </TermBody>
      </Terminal>

      <StatusBar>
        <StatusText>查看帮忙,请按 F1</StatusText>
        <Cell $w={80}>Default</Cell><Cell $w={276}>2024.10.29 00:00</Cell><Cell $w={79}>L: 2961</Cell><Cell $w={79}>C: 2995</Cell><Cell $w={78}>V: 1476478</Cell>
        <Cell $w={58}><svg width="14" height="13" stroke={GREEN} strokeWidth="1.500"><path d="M1 13v-3M4 13V8M7 13V6M10 13V3M13 13V0" /></svg>2223</Cell>
        <Ime>
          <ImeLogo><Sogou size={33} /></ImeLogo>
          <ImeText>中</ImeText>
          <svg width="12" height="12" fill="none" stroke="currentColor" strokeWidth="1.500"><circle cx="3" cy="3" r="2" /><path d="M10 6v2l-2 3" strokeWidth="2.500" /></svg>
          <svg width="12" height="16" fill="none" stroke="currentColor" strokeWidth="1.500"><rect x="4" y="1" width="4" height="8" rx="2" fill="currentColor" /><path d="M1 7q0 5 5 5t5-5M6 12v4" /></svg>
          <svg width="15" height="12" fill="none" stroke="currentColor" strokeWidth="1.500"><rect x="1" y="1" width="13" height="10" rx="1" /><path d="M3 4h9M3 6.500h9" strokeDasharray="1.500 1" /><path d="M4 9h7" /></svg>
          <svg width="16" height="16" viewBox="0 0 16 16"><path d="M4 2 0 5l2 3 1-1v7h8V7l1 1 2-3-4-3-3 2z" fill="#a878e0" /><path d="M4 2 0 5l2 3 1-1v1h8V7l1 1 2-3-4-3-3 2z" fill="#e07aa8" /><circle cx="13" cy="3" r="3" fill="#ec5a3a" /></svg>
          <svg width="13" height="13" fill="currentColor"><rect width="6" height="6" rx="2" /><rect x="7" width="6" height="6" rx="2" /><rect y="7" width="6" height="6" rx="1" /><rect x="7" y="7" width="6" height="6" rx="1" /></svg>
        </Ime>
      </StatusBar>

      <Taskbar>
        <Dock>
          <DockIcon aria-label="开始"><svg width="17" height="17" fill="#fff"><path d="M0 2.500 7.500 1.500V8H0zM8.500 1.300 17 0v8H8.500zM0 9h7.500v6.500L0 14.500zM8.500 9H17v8l-8.500-1.300z" /></svg></DockIcon>
          <DockIcon aria-label="浏览器"><svg width="24" height="24" viewBox="0 0 24 24" fill="none" strokeWidth="7"><path d="M12 4.500a7.500 7.500 0 0 1 6.500 3.700" stroke="#f3c623" /><path d="M18.500 8.200a7.500 7.500 0 0 1 0 7.500" stroke="#f05a3a" /><path d="M18.500 15.700a7.500 7.500 0 0 1-6.500 3.800" stroke="#d84bd8" /><path d="M12 19.500a7.500 7.500 0 0 1-6.500-3.800" stroke="#4a7df0" /><path d="M5.500 15.700a7.500 7.500 0 0 1 0-7.500" stroke="#2fc7c0" /><path d="M5.500 8.200A7.500 7.500 0 0 1 12 4.500" stroke="#5ad14b" /><circle cx="12" cy="12" r="4.500" fill="#fff" strokeWidth="0" /></svg></DockIcon>
          <DockIcon $w={50} aria-label="备忘"><Memo>备</Memo></DockIcon>
          <DockIcon aria-label="微信"><svg width="24" height="22" viewBox="0 0 24 22"><ellipse cx="9" cy="8" rx="9" ry="7.500" fill="#2fc15a" /><path d="M3 13v5l4-3z" fill="#2fc15a" /><ellipse cx="17" cy="14" rx="7" ry="6" fill="#e6ece8" /><path d="m19 18 3 3v-5z" fill="#e6ece8" /><g fill="#20463a"><circle cx="6" cy="6" r="1.100" /><circle cx="12" cy="6" r="1.100" /><circle cx="15" cy="13" r=".9" /><circle cx="19.500" cy="13" r=".9" /></g></svg></DockIcon>
          <DockIcon aria-label="QQ"><svg width="24" height="24" viewBox="0 0 24 24"><rect width="24" height="24" rx="5" fill="#fff" /><path d="M12 2q5 0 5.500 6l2.500 6-1.500 1Q17 21 12 21t-6.500-6L4 14l2.500-6Q7 2 12 2z" fill="#111" /><ellipse cx="12" cy="16" rx="4" ry="4.500" fill="#fff" /><circle cx="10" cy="6.500" r="1.300" fill="#fff" /><circle cx="14" cy="6.500" r="1.300" fill="#fff" /><path d="M6 11q6 3.500 12 0l.3 2q-6 3.500-12.600 0z" fill="#e3342b" /><path d="M9 8.500h6l-3 1.700zM6 22q3-3 6 0zM12 22q3-3 6 0z" fill="#f5a623" /></svg></DockIcon>
          <DockIcon aria-label="WPS"><svg width="24" height="20" viewBox="0 0 24 20" fill="none"><path d="M1 2h4.500l4 15 3-9" stroke="#e8412c" strokeWidth="3" /><path d="M9 2h5l-2 5 3.500 10L21 2" stroke="#c9301f" strokeWidth="2.500" /><path d="M14 2h9l-6 15h-2" stroke="#f0523c" strokeWidth="2.500" /></svg></DockIcon>
          <Spacer $w={5} />
          <Running $w={152} $gap={9} $pad={6}><svg width="24" height="24" viewBox="0 0 24 24"><rect width="24" height="24" rx="4" fill="#35c57c" /><path d="M7 14V6l5 4.500L17 6v8M7 6l10 8M7 14l10-8" stroke="#fff" strokeWidth="1.700" fill="none" /><path d="M9 19h6l-3 2z" fill="#fff" /></svg>农产品周期价值投...</Running>
          <Running $w={152} $gap={5} $pad={5}><svg width="24" height="24" viewBox="0 0 24 24"><rect width="24" height="24" rx="3" fill="#ee5a4b" /><path d="M18 6H8.500Q7 6 7 7.500v9Q7 18 8.500 18H18" stroke="#fff" strokeWidth="3.500" fill="none" /></svg>正在录制...</Running>
          <Running $on $w={160} $gap={0} $pad={10}>{herz(24)}500920 - HerzMa...</Running>
        </Dock>
        <Tray>
          <Plain aria-label="更多"><svg width="14" height="8" fill="none" stroke="#fff" strokeWidth="1.300"><path d="m1 7 6-6 6 6" /></svg></Plain>
          <svg width="14" height="17" fill="none" stroke="#fff"><rect x="4" y="1" width="6" height="10" rx="2" fill="#fff" /><path d="M2 9v3h10V9M7 12v4M4 16h6" /></svg>
          <svg width="17" height="15" fill="none" stroke="#fff"><path d="M5 2.500h11.500v8H5M.5.500h4v5h-4zM2.500 5.500v8h9M11 10.500v4M8 14.500h6" /></svg>
          <svg width="17" height="15" fill="none" stroke="#fff"><path d="M1 5h3l4-4v12L4 9H1zM10 4q2 3 0 6M12.500 3q3 4.500 0 9M15 1q3.500 6 0 12" /></svg>
          <TrayIme>中</TrayIme>
          <Sogou size={18} />
          <Clock dateTime="2025-01-14T10:40:15">10:40:15<br />2025/1/14/周二</Clock>
          <Desk />
        </Tray>
      </Taskbar>
    </Page>
  );
}
